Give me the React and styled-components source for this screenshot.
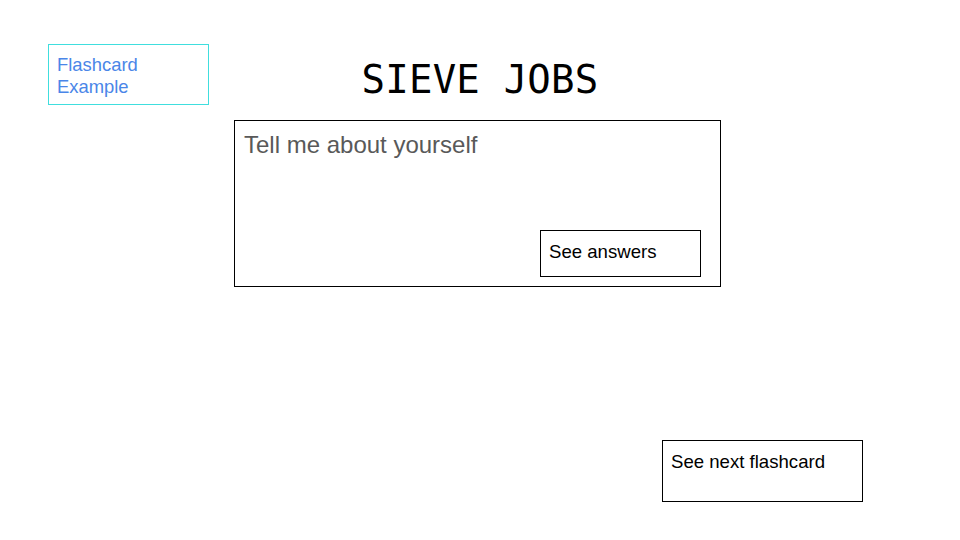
import styled, { createGlobalStyle } from 'styled-components';

const GlobalStyle = createGlobalStyle`
    body {
        margin: 0;
        background: #ffffff;
        font-family: "Liberation Sans", Arial, sans-serif;
    }
`

const Slide = styled.main`
    width: 960px;
    height: 540px;
    padding-top: 44px;
    box-sizing: border-box;
    background: #ffffff;
    overflow: hidden;
`

const TopRow = styled.header`
    display: grid;
    grid-template-columns: 1fr auto 1fr;
    align-items: start;
`

const Label = styled.div`
    margin-left: 48px;
    width: 161px;
    height: 61px;
    box-sizing: border-box;
    padding: 9px 8px 0;
    border: 1px solid #40dede;
    color: #4a86e8;
    font-size: 18.4px;
    line-height: 22px;
`

const Title = styled.h1`
    margin: 16px 0 0;
    font-family: "DejaVu Sans Mono", "Liberation Mono", monospace;
    font-weight: 400;
    font-size: 39px;
    line-height: 39px;
    color: #000000;
    letter-spacing: 0.2px;
`

const Card = styled.section`
    display: flex;
    flex-direction: column;
    justify-content: space-between;
    margin: 15px 0 0 234px;
    width: 487px;
    height: 167px;
    box-sizing: border-box;
    padding: 10px 19px 9px 9px;
    border: 1px solid #000000;
`

const Question = styled.p`
    margin: 0;
    color: #595959;
    font-size: 24px;
`

const Button = styled.div`
    align-self: ${p => (p.$end ? 'flex-end' : 'flex-start')};
    width: ${p => p.$w}px;
    height: ${p => p.$h}px;
    margin-left: ${p => p.$left || 0}px;
    margin-top: ${p => p.$top || 0}px;
    box-sizing: border-box;
    padding: ${p => p.$pad};
    border: 1px solid #000000;
    color: #000000;
    font-size: 18.6px;
    cursor: pointer;
`

function App(){

    return (
        <>
            <GlobalStyle />
            <Slide>
                <TopRow>
                    <Label>Flashcard<br />Example</Label>
                    <Title>SIEVE JOBS</Title>
                    <div />
                </TopRow>
                <Card>
                    <Question>Tell me about yourself</Question>
                    <Button $end $w={161} $h={47} $pad='10px 8px'>See answers</Button>
                </Card>
                <Button $w={201} $h={62} $left={662} $top={153} $pad='10px 8px'>See next flashcard</Button>
            </Slide>
        </>
    )
}

export default App;
